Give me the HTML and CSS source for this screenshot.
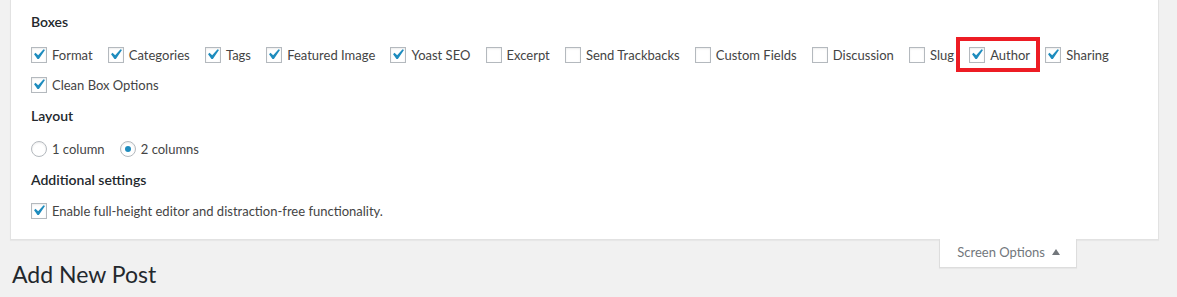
FILE: index.html
```html
<!DOCTYPE html>
<html lang="en">
<head>
<meta charset="utf-8">
<title>Add New Post</title>
<link rel="stylesheet" href="styles.css">
</head>
<body>
<div class="wrap">
  <div class="panel">
    <section class="group">
      <h5 class="group-title">Boxes</h5>
      <div class="prefs">
        <label class="opt"><span class="cb"><svg viewBox="0 0 20 20"><path d="M14.83 4.89l1.34.94-5.81 8.38H9.02L5.78 9.670l1.34-1.25 2.57 2.4z"/></svg></span>Format</label>
        <label class="opt"><span class="cb"><svg viewBox="0 0 20 20"><path d="M14.83 4.89l1.34.94-5.81 8.38H9.02L5.78 9.670l1.34-1.25 2.57 2.4z"/></svg></span>Categories</label>
        <label class="opt"><span class="cb"><svg viewBox="0 0 20 20"><path d="M14.83 4.89l1.34.94-5.81 8.38H9.02L5.78 9.670l1.34-1.25 2.57 2.4z"/></svg></span>Tags</label>
        <label class="opt"><span class="cb"><svg viewBox="0 0 20 20"><path d="M14.83 4.89l1.34.94-5.81 8.38H9.02L5.78 9.670l1.34-1.25 2.57 2.4z"/></svg></span>Featured Image</label>
        <label class="opt"><span class="cb"><svg viewBox="0 0 20 20"><path d="M14.83 4.89l1.34.94-5.81 8.38H9.02L5.78 9.670l1.34-1.25 2.57 2.4z"/></svg></span>Yoast SEO</label>
        <label class="opt"><span class="cb"></span>Excerpt</label>
        <label class="opt"><span class="cb"></span>Send Trackbacks</label>
        <label class="opt"><span class="cb"></span>Custom Fields</label>
        <label class="opt"><span class="cb"></span>Discussion</label>
        <label class="opt"><span class="cb"></span>Slug</label>
        <label class="opt opt-marked"><span class="cb"><svg viewBox="0 0 20 20"><path d="M14.83 4.89l1.34.94-5.81 8.38H9.02L5.78 9.670l1.34-1.25 2.57 2.4z"/></svg></span>Author<span class="marker"></span></label>
        <label class="opt"><span class="cb"><svg viewBox="0 0 20 20"><path d="M14.83 4.89l1.34.94-5.81 8.38H9.02L5.78 9.670l1.34-1.25 2.57 2.4z"/></svg></span>Sharing</label>
        <label class="opt"><span class="cb"><svg viewBox="0 0 20 20"><path d="M14.83 4.89l1.34.94-5.81 8.38H9.02L5.78 9.670l1.34-1.25 2.57 2.4z"/></svg></span>Clean Box Options</label>
      </div>
    </section>
    <section class="group">
      <h5 class="group-title">Layout</h5>
      <div class="prefs">
        <label class="opt"><span class="rb"></span>1 column</label>
        <label class="opt"><span class="rb is-checked"></span>2 columns</label>
      </div>
    </section>
    <section class="group group-last">
      <h5 class="group-title">Additional settings</h5>
      <div class="prefs">
        <label class="opt"><span class="cb"><svg viewBox="0 0 20 20"><path d="M14.83 4.89l1.34.94-5.81 8.38H9.02L5.78 9.670l1.34-1.25 2.57 2.4z"/></svg></span>Enable full-height editor and distraction-free functionality.</label>
      </div>
    </section>
  </div>
  <div class="tab">Screen Options<span class="tab-arrow"></span></div>
  <h1 class="page-title">Add New Post</h1>
</div>
</body>
</html>
```

FILE: styles.css
```css
* {
  box-sizing: border-box;
}

body {
  margin: 0;
  background: #f1f1f1;
  font-family: Lato, "Open Sans", "DejaVu Sans", sans-serif;
  font-size: 13px;
  color: #444;
}

.wrap {
  margin: 0 18px 0 10px;
}

.panel {
  background: #fff;
  border: 1px solid #e2e2e2;
  border-top: 0;
  box-shadow: 0 1px 1px rgba(0, 0, 0, 0.04);
  padding: 12px 20px 13px;
}

.group-title {
  margin: 0 0 8px;
  font-size: 14px;
  font-weight: 600;
  line-height: 20px;
  color: #23282d;
}

.group + .group .group-title {
  margin-top: 6px;
}

.group-last .group-title {
  margin-bottom: 6px;
}

.prefs {
  display: flex;
  flex-wrap: wrap;
}

.opt {
  position: relative;
  display: flex;
  align-items: center;
  height: 30px;
  margin-right: 15.2px;
  white-space: nowrap;
}

.cb,
.rb {
  position: relative;
  flex: none;
  width: 16px;
  height: 16px;
  margin-right: 5px;
  border: 1px solid #b4b9be;
  background: #fff;
  box-shadow: inset 0 1px 2px rgba(0, 0, 0, 0.08);
}

.cb svg {
  position: absolute;
  left: -4px;
  top: -4px;
  width: 21px;
  height: 21px;
  fill: #1e8cbe;
}

.rb {
  border-radius: 50%;
}

.rb.is-checked::before {
  content: "";
  position: absolute;
  left: 4px;
  top: 4px;
  width: 6px;
  height: 6px;
  border-radius: 50%;
  background: #1e8cbe;
}

.marker {
  position: absolute;
  left: -13px;
  top: -3px;
  width: 84px;
  height: 35px;
  border: 4px solid #ed1c24;
}

.tab {
  float: right;
  position: relative;
  margin: -1px 82px 0 0;
  height: 29px;
  padding: 0 16px 0 17px;
  background: #fff;
  border: 1px solid #ddd;
  border-top: 0;
  box-shadow: 0 1px 1px rgba(0, 0, 0, 0.04);
  line-height: 27px;
  color: #72777c;
  font-size: 13px;
}

.tab-arrow {
  display: inline-block;
  margin-left: 7px;
  vertical-align: 2px;
  border-left: 4px solid transparent;
  border-right: 4px solid transparent;
  border-bottom: 6px solid #72777c;
}

.page-title {
  margin: 0;
  padding: 20px 0 0 2px;
  font-size: 23px;
  font-weight: 400;
  line-height: 29px;
  color: #23282d;
}
```
